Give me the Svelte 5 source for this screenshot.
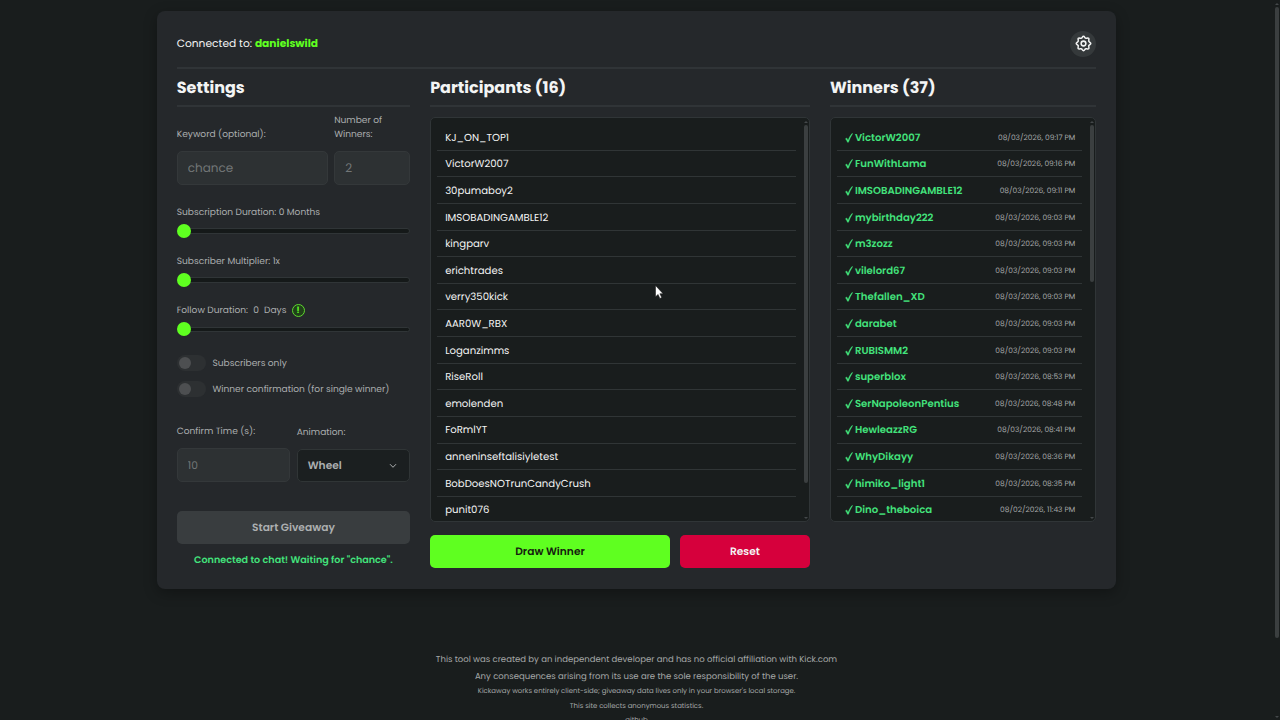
<script lang="ts">
    const participants = [
        "KJ_ON_TOP1", "VictorW2007", "30pumaboy2", "IMSOBADINGAMBLE12", "kingparv",
        "erichtrades", "verry350kick", "AAR0W_RBX", "Loganzimms", "RiseRoll", "emolenden",
        "FoRmlYT", "anneninseftalisiyletest", "BobDoesNOTrunCandyCrush", "punit076",
    ];

    const winners = [
        { name: "VictorW2007", time: "08/03/2026, 09:17 PM" },
        { name: "FunWithLama", time: "08/03/2026, 09:16 PM" },
        { name: "IMSOBADINGAMBLE12", time: "08/03/2026, 09:11 PM" },
        { name: "mybirthday222", time: "08/03/2026, 09:03 PM" },
        { name: "m3zozz", time: "08/03/2026, 09:03 PM" },
        { name: "vilelord67", time: "08/03/2026, 09:03 PM" },
        { name: "Thefallen_XD", time: "08/03/2026, 09:03 PM" },
        { name: "darabet", time: "08/03/2026, 09:03 PM" },
        { name: "RUBISMM2", time: "08/03/2026, 09:03 PM" },
        { name: "superblox", time: "08/03/2026, 08:53 PM" },
        { name: "SerNapoleonPentius", time: "08/03/2026, 08:48 PM" },
        { name: "HewleazzRG", time: "08/03/2026, 08:41 PM" },
        { name: "WhyDikayy", time: "08/03/2026, 08:36 PM" },
        { name: "himiko_light1", time: "08/03/2026, 08:35 PM" },
        { name: "Dino_theboica", time: "08/02/2026, 11:43 PM" },
    ];
</script>

{#snippet slider()}
    <div class="slider"><span class="thumb"></span></div>
{/snippet}

<div class="page">
    <main class="card">
        <header>
            <div class="connected">Connected to: <strong>danielswild</strong></div>
            <button class="gear" aria-label="Settings">
                <svg viewBox="0 0 24 24" width="19" height="19" fill="none" stroke="currentColor" stroke-width="1.9" stroke-linejoin="round">
                    <path d="M10.4 4.2Q12 1.4 13.6 4.2 14.4 6 16.3 5.3 19.6 4.4 18.7 7.7 18 9.6 19.8 10.4 22.6 12 19.8 13.6 18 14.4 18.7 16.3 19.6 19.6 16.3 18.7 14.4 18 13.6 19.8 12 22.6 10.4 19.8 9.6 18 7.7 18.7 4.4 19.6 5.3 16.3 6 14.4 4.2 13.6 1.4 12 4.2 10.4 6 9.6 5.3 7.7 4.4 4.4 7.7 5.3 9.6 6 10.4 4.2z" />
                    <circle cx="12" cy="12" r="3" />
                </svg>
            </button>
        </header>

        <div class="columns">
            <section class="settings">
                <h2>Settings</h2>
                <div class="field-row top">
                    <label class="keyword">
                        <span>Keyword (optional):</span>
                        <input value="chance" disabled>
                    </label>
                    <label class="count">
                        <span>Number of<br>Winners:</span>
                        <input value="2" disabled>
                    </label>
                </div>
                <div class="range">
                    <div class="range-label">Subscription Duration: 0 Months</div>
                    {@render slider()}
                </div>
                <div class="range">
                    <div class="range-label">Subscriber Multiplier: 1x</div>
                    {@render slider()}
                </div>
                <div class="range">
                    <div class="range-label follow">
                        <span>Follow Duration:</span><span>0</span><span>Days</span>
                        <i class="info">!</i>
                    </div>
                    {@render slider()}
                </div>
                <div class="toggles">
                    <div class="toggle"><span class="switch"></span>Subscribers only</div>
                    <div class="toggle"><span class="switch"></span>Winner confirmation (for single winner)</div>
                </div>
                <div class="field-row bottom">
                    <label>
                        <span>Confirm Time (s):</span>
                        <input class="small" value="10" disabled>
                    </label>
                    <div class="animation">
                        <span>Animation:</span>
                        <button class="select">
                            Wheel
                            <svg viewBox="0 0 8 6" width="8" height="6" fill="none" stroke="currentColor"><path d="M1 1.2 4 4.3 7 1.2" /></svg>
                        </button>
                    </div>
                </div>
                <button class="start" disabled>Start Giveaway</button>
                <p class="status">Connected to chat! Waiting for "chance".</p>
            </section>

            <section class="participants">
                <h2>Participants (16)</h2>
                <div class="list">
                    <ul>
                        {#each participants as name}
                            <li>{name}</li>
                        {/each}
                    </ul>
                    <div class="scrollbar"><span class="bar long"></span></div>
                </div>
                <div class="actions">
                    <button class="draw">Draw Winner</button>
                    <button class="reset">Reset</button>
                </div>
            </section>

            <section class="winners">
                <h2>Winners (37)</h2>
                <div class="list">
                    <ul>
                        {#each winners as { name, time }}
                            <li>
                                <svg class="check" viewBox="0 0 8 10" width="8" height="10"><path d="M.4 5.8 1.8 4.9 3 7.2Q4.6 3.4 6.7.8L7.8.4Q5.2 4.3 3.5 9.3L2.4 9.3Q1.6 7.1.4 5.8z" fill="currentColor" stroke="currentColor" stroke-width=".3" /></svg>
                                <span>{name}</span>
                                <time>{time}</time>
                            </li>
                        {/each}
                    </ul>
                    <div class="scrollbar"><span class="bar short"></span></div>
                </div>
            </section>
        </div>
    </main>

    <footer>
        <p>This tool was created by an independent developer and has no official affiliation with Kick.com</p>
        <p>Any consequences arising from its use are the sole responsibility of the user.</p>
        <p class="note">Kickaway works entirely client-side; giveaway data lives only in your browser's local storage.</p>
        <p class="note">This site collects anonymous statistics.</p>
        <p class="note">github</p>
    </footer>

    <div class="scrollbar page-scroll"><span class="bar"></span></div>
    <svg class="cursor" viewBox="0 0 10 16" width="10" height="16"><path d="M.5.5v11.2l2.6-2.3 1.8 4 1.8-.8-1.8-3.9h3.2z" fill="#fff" stroke="#111" stroke-width=".5" /></svg>
</div>

<style>
    :global(body) {
        margin: 0;
        background: #191d1d;
    }
    * {
        box-sizing: border-box;
    }
    .page {
        position: relative;
        height: 720px;
        overflow: hidden;
        padding: 11px 7px 0 0;
        font: 10.67px Poppins, Inter, sans-serif;
        text-rendering: geometricPrecision;
        color: #f3f4f4;
        background: #191d1d;
    }
    button, input {
        font: inherit;
        color: inherit;
        margin: 0;
        text-rendering: inherit;
    }
    .card {
        width: 959.5px;
        height: 577.5px;
        margin: 0 auto;
        padding: 20px;
        border-radius: 8px;
        background: #25282b;
        box-shadow: 0 4px 14px rgba(0, 0, 0, 0.3);
    }
    header {
        display: flex;
        align-items: center;
        justify-content: space-between;
        height: 38px;
        padding-bottom: 11px;
        border-bottom: 2px solid #303437;
    }
    .connected {
        padding-top: 1px;
    }
    .connected strong {
        color: #5fff20;
    }
    .gear {
        display: flex;
        align-items: center;
        justify-content: center;
        width: 26px;
        height: 26px;
        padding: 0;
        border: none;
        border-radius: 50%;
        background: #35393b;
    }
    .columns {
        display: flex;
        gap: 20px;
    }
    .settings { width: 233.5px; }
    .participants { width: 380px; }
    .winners { width: 266.5px; }
    h2 {
        height: 38px;
        margin: 0 0 10px;
        border-bottom: 2px solid #303437;
        font-size: 16px;
        line-height: 37px;
        font-weight: 700;
    }
    .settings {
        color: #acafb0;
        font-size: 9.07px;
    }
    .settings h2 {
        color: #f3f4f4;
    }
    .field-row {
        display: flex;
        align-items: flex-end;
        gap: 6.5px;
    }
    .field-row label {
        display: flex;
        flex-direction: column;
        flex: 1;
        gap: 9.6px;
        line-height: 13.3px;
    }
    .top {
        height: 68px;
    }
    .field-row .count { flex: 0 0 76px; }
    input {
        width: 100%;
        height: 34.5px;
        padding: 2px 10px 0;
        border: 1px solid #34383a;
        border-radius: 5px;
        background: #2d3133;
        color: #727677;
        font-size: 12px;
    }
    input.small {
        font-size: 10.67px;
    }
    .range {
        height: 49.33px;
        padding-top: 19.5px;
    }
    .range-label {
        height: 16px;
        line-height: 16px;
    }
    .follow {
        display: flex;
        gap: 5.2px;
        align-items: center;
    }
    .info {
        width: 13px;
        height: 13px;
        margin-bottom: 1px;
        border: 1px solid #5ed82f;
        border-radius: 50%;
        background: #204019;
        color: #66ff29;
        font: bold 9px/11px Inter, sans-serif;
        text-align: center;
    }
    .slider {
        display: flex;
        align-items: center;
        height: 5.5px;
        margin-top: 7.5px;
        border: 1px solid #303537;
        border-radius: 3px;
        background: #151919;
    }
    .thumb {
        flex: none;
        width: 14px;
        height: 14px;
        margin-left: -1px;
        border-radius: 50%;
        background: #5fff20;
    }
    .toggles {
        height: 91.8px;
        padding-top: 22px;
    }
    .toggle {
        display: flex;
        align-items: center;
        gap: 6.7px;
        height: 18px;
        margin-bottom: 8px;
    }
    .switch {
        display: flex;
        align-items: center;
        width: 29px;
        height: 16px;
        margin-bottom: 2px;
        padding-left: 2px;
        border-radius: 8px;
        background: #2d3032;
    }
    .switch::before {
        content: "";
        width: 12px;
        height: 12px;
        border-radius: 50%;
        background: #4d4f51;
    }
    .animation {
        display: flex;
        flex-direction: column;
        flex: 1;
        gap: 9.7px;
        line-height: 13.3px;
    }
    .select {
        display: flex;
        align-items: center;
        justify-content: space-between;
        height: 33px;
        padding: 0 12px 0 10px;
        border: 1px solid #303536;
        border-radius: 5px;
        background: #1b1f20;
        font-size: 10.67px;
        font-weight: 600;
    }
    .start {
        display: block;
        width: 100%;
        height: 33px;
        margin-top: 29px;
        padding-top: 1.5px;
        border: none;
        border-radius: 5px;
        background: #393d3f;
        font-size: 10.67px;
        font-weight: 600;
    }
    .status {
        margin: 10px 0 0;
        line-height: 14px;
        text-align: center;
        color: #43e37c;
        font-size: 9.6px;
        font-weight: 600;
    }
    .list {
        position: relative;
        height: 405px;
        overflow: hidden;
        border: 1px solid #303537;
        border-radius: 5px;
        background: #191d1d;
    }
    ul {
        margin: 0;
        padding: 6.2px 13px 0 6px;
        list-style: none;
    }
    li {
        display: flex;
        align-items: center;
        height: 26.62px;
        padding: 1.5px 8px 0;
        border-bottom: 1px solid #303536;
        font-size: 10.13px;
    }
    .winners li {
        padding-right: 7px;
        color: #43e37c;
        font-weight: 600;
    }
    .check {
        margin-right: 2px;
    }
    time {
        margin-left: auto;
        color: #a4a7a8;
        font-size: 7.47px;
        font-weight: 400;
    }
    .scrollbar {
        position: absolute;
        top: 0;
        right: 0;
        bottom: 0;
        width: 6px;
    }
    .scrollbar::before, .scrollbar::after {
        content: "";
        position: absolute;
        left: 1px;
        border: 2px solid transparent;
    }
    .scrollbar::before {
        top: 1px;
        border-bottom-color: #44484a;
    }
    .scrollbar::after {
        bottom: 0;
        border-top-color: #44484a;
    }
    .bar {
        display: block;
        width: 4px;
        margin: 7px 0 0 1px;
        border-radius: 2px;
        background: #3b3f40;
    }
    .long { height: 358px; }
    .short { height: 157px; }
    .page-scroll .bar { height: 631px; }
    .actions {
        display: flex;
        gap: 10px;
        margin-top: 13px;
    }
    .actions button {
        height: 33px;
        padding-top: 2px;
        border: none;
        border-radius: 5px;
        font-weight: 600;
    }
    .actions .draw {
        flex: 1;
        background: #5fff20;
        color: #15200f;
    }
    .actions .reset {
        width: 130px;
        background: #d6003c;
    }
    footer {
        padding-top: 62.4px;
        text-align: center;
        color: #a5a8a8;
        font-size: 8.53px;
    }
    footer p {
        margin: 0;
        line-height: 16.8px;
        white-space: nowrap;
    }
    footer .note {
        position: relative;
        top: 1px;
        font-size: 6.93px;
        line-height: 14.4px;
    }
    .cursor {
        position: absolute;
        left: 655px;
        top: 285px;
    }
</style>
